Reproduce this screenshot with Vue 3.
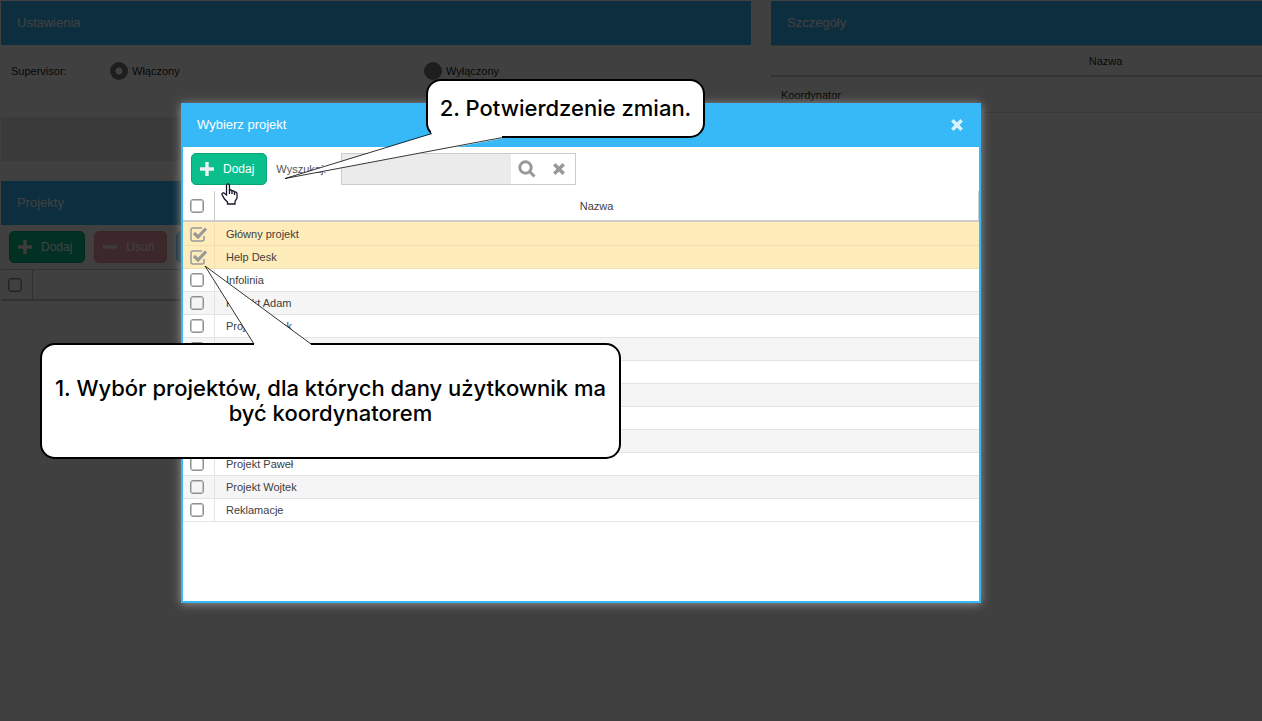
<script setup>
import { ref } from 'vue'

const supervisor = ref('on')
const query = ref('')
const projects = ref([
  { name: 'Główny projekt', checked: true },
  { name: 'Help Desk', checked: true },
  { name: 'Infolinia', checked: false },
  { name: 'Projekt Adam', checked: false },
  { name: 'Projekt Jacek', checked: false },
  { name: '', checked: false },
  { name: '', checked: false },
  { name: '', checked: false },
  { name: '', checked: false },
  { name: '', checked: false },
  { name: 'Projekt Paweł', checked: false },
  { name: 'Projekt Wojtek', checked: false },
  { name: 'Reklamacje', checked: false },
])
</script>

<template>
  <div class="screen">
    <main class="page">
      <div class="left">
        <section>
          <h2 class="bar">Ustawienia</h2>
          <fieldset class="settings">
            <span class="legend">Supervisor:</span>
            <label class="choice"><input v-model="supervisor" class="radio" type="radio" name="supervisor" value="on">Włączony</label>
            <label class="choice"><input v-model="supervisor" class="radio" type="radio" name="supervisor" value="off">Wyłączony</label>
          </fieldset>
          <div class="footer"></div>
        </section>
        <section class="projects">
          <h2 class="bar">Projekty</h2>
          <div class="tools">
            <button class="btn green" type="button">
              <svg class="ico" viewBox="0 0 16 16"><path d="M6.3 1h3.4v5.3H15v3.4H9.7V15H6.3V9.7H1V6.3h5.3z" /></svg>Dodaj
            </button>
            <button class="btn red" type="button" disabled>
              <svg class="ico" viewBox="0 0 16 16"><path d="M1 6.3h14v3.4H1z" /></svg>Usuń
            </button>
            <button class="btn blue" type="button" disabled aria-label="Edytuj"></button>
          </div>
          <div class="gridhead"><span class="cell"><input class="check" type="checkbox" aria-label="Zaznacz wszystko"></span></div>
        </section>
      </div>
      <section class="right">
        <h2 class="bar">Szczegóły</h2>
        <table class="details">
          <thead><tr><th>Nazwa</th></tr></thead>
          <tbody><tr><td>Koordynator</td></tr></tbody>
        </table>
      </section>
    </main>

    <div class="overlay">
      <div class="dialog" role="dialog" aria-labelledby="dialog-title">
        <header class="bar dialog-bar">
          <span id="dialog-title">Wybierz projekt</span>
          <button class="plain close" type="button" aria-label="Zamknij">
            <svg viewBox="0 0 12 12"><path d="M2 2l8 8M10 2l-8 8" /></svg>
          </button>
        </header>
        <div class="tools">
          <button class="btn green" type="button">
            <svg class="ico" viewBox="0 0 16 16"><path d="M6.3 1h3.4v5.3H15v3.4H9.7V15H6.3V9.7H1V6.3h5.3z" /></svg>Dodaj
          </button>
          <label class="search-label" for="search">Wyszukaj:</label>
          <div class="search">
            <input id="search" v-model="query" type="text">
            <button class="plain" type="button" aria-label="Szukaj">
              <svg class="lens" viewBox="0 0 18 18"><circle cx="7.5" cy="7.5" r="5.7" /><path d="M11.5 11.5l5 5" /></svg>
            </button>
            <button class="plain" type="button" aria-label="Wyczyść">
              <svg class="clear" viewBox="0 0 12 12"><path d="M2 2l8 8M10 2l-8 8" /></svg>
            </button>
          </div>
        </div>
        <table class="list">
          <thead>
            <tr>
              <th class="tick"><input class="check" type="checkbox" aria-label="Zaznacz wszystko"></th>
              <th>Nazwa</th>
            </tr>
          </thead>
          <tbody>
            <tr v-for="(p, i) in projects" :key="i" :class="{ on: p.checked }">
              <td class="tick"><input :id="'p' + i" v-model="p.checked" class="check" type="checkbox"></td>
              <td><label :for="'p' + i">{{ p.name }}</label></td>
            </tr>
          </tbody>
        </table>
      </div>
    </div>

    <svg class="cursor" viewBox="0 0 17 22">
      <path d="M5.5 12V2.5Q5.5 1 7 1t1.500 1.500V7Q10 6.200 11 8q1.700-.8 2.500 1 2-.5 2.500 1.500V15l-2 3.500V21H6.500v-2L3.500 16 1 11.500Q1 9.500 3 10z" />
      <path class="lines" d="M8.500 7v4M11 8v3M13.500 9v3" />
    </svg>

    <div class="callout confirm">
      <svg class="tail" viewBox="0 0 230 50"><path class="fill" d="M147 0v5L1 49.500 218 9.500V0z" /><path d="M148 4.500L1 49.500L205 11L219 8.500" /></svg>
      <span>2. Potwierdzenie zmian.</span>
    </div>
    <div class="callout choose">
      <svg class="tail" viewBox="0 0 110 82"><path class="fill" d="M50 82v-3L1 1l106 78v3z" /><path d="M50 79L1 1l106 78" /></svg>
      <span>1. Wybór projektów, dla których dany użytkownik ma być koordynatorem</span>
    </div>
  </div>
</template>

<style>
body {
  margin: 0;
  background: #fff;
}
</style>

<style scoped>
.screen {
  position: relative;
  min-height: 100vh;
  overflow: hidden;
  font: 11px/16px "Liberation Sans", Arial, sans-serif;
  color: #404040;
}

.screen *,
.screen *::before {
  box-sizing: border-box;
}

.page {
  display: flex;
  gap: 20px;
  padding: 1px 0 0 1px;
}

.left {
  flex: 0 0 750px;
}

.right {
  flex: 1 0 669px;
}

.bar {
  display: flex;
  align-items: center;
  height: 44px;
  margin: 0;
  padding: 0 16px;
  background: #36b9f6;
  color: #fff;
  font-size: 13px;
  font-weight: 400;
}

.settings {
  display: flex;
  align-items: center;
  height: 72px;
  margin: 0;
  padding: 0 0 20px 10px;
  border: 0;
  color: #222;
}

.legend {
  flex: 0 0 99px;
}

.choice {
  display: flex;
  align-items: center;
  gap: 4px;
  width: 314px;
}

.radio {
  appearance: none;
  width: 18px;
  height: 18px;
  margin: 0;
  border-radius: 50%;
  background: #777;
}

.radio:checked {
  background: radial-gradient(circle, #fff 3px, #777 4px);
}

.footer {
  height: 44px;
  background: #e8e8e8;
}

.projects {
  margin-top: 20px;
}

.tools {
  display: flex;
  align-items: center;
  gap: 9px;
  padding: 6px 8px;
}

.btn {
  display: flex;
  align-items: center;
  gap: 8px;
  height: 32px;
  padding: 0 12px 0 7px;
  border: 1px solid;
  border-radius: 5px;
  color: #fff;
  font: 12px/16px "Liberation Sans", Arial, sans-serif;
}

.ico {
  width: 16px;
  height: 16px;
  fill: #f0f0f0;
}

.green {
  border-color: #07a377;
  background: #0bbf8c;
}

.red {
  border-color: #e88f99;
  background: #f0a0a8;
}

.blue {
  width: 76px;
  border-color: #4fb0e6;
  background: #5bbcf0;
}

.gridhead {
  height: 32px;
  border-top: 1px solid #c8c8c8;
  border-bottom: 2px solid #c8c8c8;
}

.cell {
  display: flex;
  align-items: center;
  width: 32px;
  height: 100%;
  padding-left: 7px;
  border-right: 1px solid #c8c8c8;
}

.check {
  appearance: none;
  display: block;
  width: 14px;
  height: 14px;
  margin: 0;
  border: 1px solid #909090;
  border-radius: 3px;
  box-shadow: inset 0 0 0 1px #c4c4c4;
}

.check:checked {
  width: 18px;
  height: 16px;
  border: 0;
  border-radius: 0;
  box-shadow: none;
  background: url("data:image/svg+xml,%3Csvg xmlns='http://www.w3.org/2000/svg' viewBox='0 0 18 16' fill='none' stroke='%23999'%3E%3Cpath stroke-width='1.500' d='M14 10v3q0 2-2 2H3q-2 0-2-2V4q0-2 2-2h9'/%3E%3Cpath stroke-width='3.200' d='M4 7l4 4 8-8.500'/%3E%3C/svg%3E") no-repeat;
}

.details {
  width: 100%;
  border-collapse: separate;
  border-spacing: 0;
}

.details th {
  height: 32px;
  padding: 0;
  border-top: 1px solid #ccc;
  border-bottom: 2px solid #ccc;
  color: #222;
  font-weight: 400;
}

.details td {
  height: 36px;
  padding: 0 10px;
  border-bottom: 1px solid #ddd;
  color: #222;
}

.overlay {
  position: absolute;
  inset: 0;
  padding: 103px 0 0 181px;
  background: rgba(0, 0, 0, 0.75);
}

.dialog {
  width: 800px;
  height: 500px;
  border: 2px solid #36b9f6;
  border-top: 0;
  background: #fff;
  box-shadow: 0 1px 9px #999;
}

.dialog-bar {
  justify-content: space-between;
  padding: 0 15px 0 14px;
}

.plain {
  display: grid;
  place-items: center;
  flex: 0 0 32px;
  height: 30px;
  padding: 0;
  border: 0;
  background: none;
}

.plain.close {
  flex-basis: 14px;
}

.plain svg {
  width: 14px;
  height: 14px;
  fill: none;
  stroke: #999;
  stroke-width: 3;
}

.plain .lens {
  width: 18px;
  height: 18px;
}

.close svg {
  stroke: #dcf2fd;
}

.search-label {
  color: #555;
}

.search {
  display: flex;
  width: 235px;
  height: 32px;
  margin-left: 6px;
  border: 1px solid #ccc;
}

.search input {
  flex: 1;
  min-width: 0;
  padding: 0 6px;
  border: 0;
  background: #ebebeb;
}

.list {
  width: 100%;
  border-collapse: separate;
  border-spacing: 0;
  table-layout: fixed;
}

.list th {
  height: 31px;
  padding: 0;
  border-right: 1px solid #ccc;
  border-bottom: 2px solid #ccc;
  font-weight: 400;
}

.list td {
  height: 23px;
  padding: 0 11px;
  border-bottom: 1px solid #e4e4e4;
}

.list tbody tr:first-child td {
  height: 24px;
  padding-top: 1px;
}

.list .tick {
  width: 32px;
  padding-left: 7px;
}

.list td.tick {
  padding: 0 0 0 7px;
  border-right: 1px solid #e4e4e4;
}

.list tbody tr:nth-child(even) {
  background: #f5f5f5;
}

.list tbody tr.on {
  background: #feedba;
}

.list .on td {
  border-color: #f0e0b4;
}

.cursor {
  position: absolute;
  left: 221px;
  top: 183px;
  width: 17px;
  height: 22px;
  fill: #fff;
  stroke: #15152b;
  stroke-width: 1.3;
}

.callout {
  position: absolute;
  display: grid;
  place-items: center;
  border: 2px solid #000;
  border-radius: 15px;
  background: #fff;
  color: #000;
  font: 500 22px/25px Inter, "Liberation Sans", sans-serif;
  text-align: center;
}

.tail {
  position: absolute;
  fill: none;
  stroke: #000;
  stroke-width: 0.8;
}

.tail .fill {
  fill: #fff;
  stroke: none;
}

.confirm {
  left: 426px;
  top: 79px;
  width: 279px;
  height: 59px;
}

.confirm .tail {
  left: -144px;
  top: 48px;
  width: 230px;
  height: 50px;
}

.choose {
  left: 40px;
  top: 343px;
  width: 581px;
  height: 116px;
}

.choose .tail {
  left: 162px;
  top: -80px;
  width: 110px;
  height: 82px;
}
</style>
